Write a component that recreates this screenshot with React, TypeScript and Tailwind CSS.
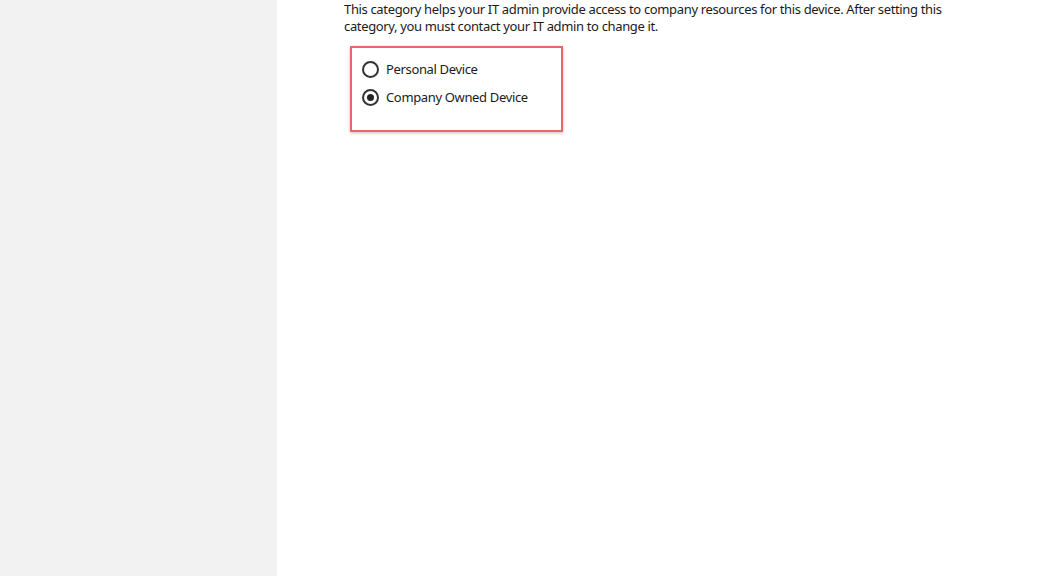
export default function App() {
  return (
    <div className="flex h-[576px] w-[1038px] overflow-hidden bg-white" style={{ fontFamily: '"Noto Sans", "Open Sans", sans-serif' }}>
      <aside className="w-[277px] shrink-0 bg-[#f2f2f2]" />
      <main className="flex-1 pl-[67px] pt-[1px] tracking-[-0.35px] text-[#1b1b1b]">
        <p className="w-[605px] text-[13px] leading-[17px]">
          This category helps your IT admin provide access to company resources for this device. After setting this
          category, you must contact your IT admin to change it.
        </p>
        <div className="ml-[6px] mt-[11px] flex h-[86px] w-[213px] flex-col gap-[11px] border-2 border-[#e8676b] pl-[10px] pt-[13px] shadow-[0_1px_3px_rgba(0,0,0,0.25)]">
          <label className="flex items-center gap-[7px] text-[13px] leading-[17px]">
            <span className="flex h-[17px] w-[17px] items-center justify-center rounded-full border-2 border-[#333]" />
            Personal Device
          </label>
          <label className="flex items-center gap-[7px] text-[13px] leading-[17px]">
            <span className="flex h-[17px] w-[17px] items-center justify-center rounded-full border-2 border-[#333]">
              <span className="h-[7px] w-[7px] rounded-full bg-[#222]" />
            </span>
            Company Owned Device
          </label>
        </div>
      </main>
    </div>
  );
}
